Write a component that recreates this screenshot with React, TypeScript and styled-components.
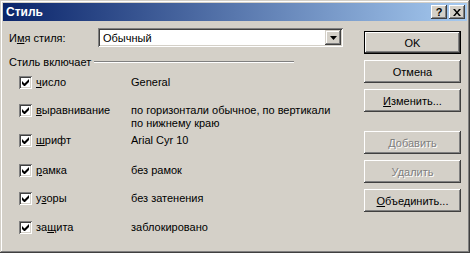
import styled, { createGlobalStyle } from "styled-components";

const GlobalStyle = createGlobalStyle`
    html, body {
        margin: 0;
        padding: 0;
        background: #d4d0c8;
    }
    body {
        font-family: "Liberation Sans", Arial, sans-serif;
        font-size: 11px;
        color: #000;
    }
`;

const rows = [
    { pre: "", key: "ч", rest: "исло", value: ["General"], h: 28 },
    { pre: "", key: "в", rest: "ыравнивание", value: ["по горизонтали обычное, по вертикали", "по нижнему краю"], h: 30 },
    { pre: "", key: "ш", rest: "рифт", value: ["Arial Cyr 10"], h: 30 },
    { pre: "", key: "р", rest: "амка", value: ["без рамок"], h: 28 },
    { pre: "у", key: "з", rest: "оры", value: ["без затенения"], h: 29 },
    { pre: "за", key: "щ", rest: "ита", value: ["заблокировано"], h: 29 },
];

const App = () => {
    return (
        <>
            <GlobalStyle />
            <Window>
                <TitleBar>
                    <Title>Стиль</Title>
                    <CaptionButtons>
                        <CaptionButton>?</CaptionButton>
                        <CaptionButton>
                            <svg width="8" height="7" viewBox="0 0 8 7">
                                <path d="M0 0h2l2 2.5L6 0h2L5 3.5 8 7H6L4 4.5 2 7H0l3-3.5z" fill="#000" />
                            </svg>
                        </CaptionButton>
                    </CaptionButtons>
                </TitleBar>

                <Body>
                    <LeftPane>
                        <NameRow>
                            <NameLabel>И<u>м</u>я стиля:</NameLabel>
                            <Combo>
                                <ComboText>Обычный</ComboText>
                                <ComboArrow>
                                    <svg width="7" height="4" viewBox="0 0 7 4">
                                        <path d="M0 0h7L3.5 4z" fill="#000" />
                                    </svg>
                                </ComboArrow>
                            </Combo>
                        </NameRow>

                        <GroupHeader>
                            <span>Стиль включает</span>
                            <GroupLine />
                        </GroupHeader>

                        <Rows>
                            {rows.map((r) => (
                                <Row key={r.rest} $h={r.h}>
                                    <CheckBox>
                                        <svg width="7" height="7" viewBox="0 0 7 7">
                                            <path d="M0 2v3l2 2h1l4-4V0L2.5 4.5z" fill="#000" />
                                        </svg>
                                    </CheckBox>
                                    <RowLabel>
                                        {r.pre}
                                        <u>{r.key}</u>
                                        {r.rest}
                                    </RowLabel>
                                    <RowValue>
                                        {r.value.map((line) => (
                                            <div key={line}>{line}</div>
                                        ))}
                                    </RowValue>
                                </Row>
                            ))}
                        </Rows>
                    </LeftPane>

                    <ButtonColumn>
                        <Button $default>OK</Button>
                        <Button>Отмена</Button>
                        <Button><u>И</u>зменить...</Button>
                        <Button $disabled $gapTop>Добавить</Button>
                        <Button $disabled>Удалить</Button>
                        <Button><u>О</u>бъединить...</Button>
                    </ButtonColumn>
                </Body>
            </Window>
        </>
    );
};

export default App;

const Window = styled.div`
    width: 470px;
    height: 253px;
    box-sizing: border-box;
    padding: 3px;
    background: #d4d0c8;
    box-shadow:
        inset -1px -1px #404040,
        inset 1px 1px #d4d0c8,
        inset -2px -2px #808080,
        inset 2px 2px #ffffff;
    display: flex;
    flex-direction: column;
`;

const TitleBar = styled.div`
    height: 18px;
    display: flex;
    align-items: center;
    justify-content: space-between;
    background: linear-gradient(to right, #0a246a, #a6caf0);
    padding: 0 2px 0 3px;
`;

const Title = styled.span`
    color: #fff;
    font-weight: bold;
    font-size: 12px;
`;

const CaptionButtons = styled.div`
    display: flex;
    gap: 2px;
`;

const CaptionButton = styled.div`
    width: 16px;
    height: 14px;
    box-sizing: border-box;
    display: flex;
    align-items: center;
    justify-content: center;
    background: #d4d0c8;
    font-weight: bold;
    font-size: 11px;
    box-shadow:
        inset -1px -1px #404040,
        inset 1px 1px #ffffff,
        inset -2px -2px #808080;
`;

const Body = styled.div`
    flex: 1;
    display: flex;
    justify-content: space-between;
    padding: 7px 6px 0 6px;
`;

const LeftPane = styled.div`
    display: flex;
    flex-direction: column;
`;

const NameRow = styled.div`
    display: flex;
    align-items: center;
    height: 19px;
`;

const NameLabel = styled.span`
    width: 89px;
`;

const Combo = styled.div`
    width: 245px;
    height: 19px;
    box-sizing: border-box;
    background: #fff;
    display: flex;
    align-items: center;
    justify-content: space-between;
    padding: 2px;
    box-shadow:
        inset 1px 1px #808080,
        inset -1px -1px #ffffff,
        inset 2px 2px #404040,
        inset -2px -2px #d4d0c8;
`;

const ComboText = styled.span`
    padding-left: 3px;
`;

const ComboArrow = styled.div`
    width: 16px;
    height: 15px;
    box-sizing: border-box;
    display: flex;
    align-items: center;
    justify-content: center;
    background: #d4d0c8;
    box-shadow:
        inset -1px -1px #404040,
        inset 1px 1px #d4d0c8,
        inset -2px -2px #808080,
        inset 2px 2px #ffffff;
`;

const GroupHeader = styled.div`
    display: flex;
    align-items: center;
    gap: 3px;
    margin-top: 8px;
    height: 14px;
`;

const GroupLine = styled.div`
    width: 200px;
    height: 1px;
    background: #808080;
    border-bottom: 1px solid #fff;
`;

const Rows = styled.div`
    display: flex;
    flex-direction: column;
    padding-top: 7px;
    padding-left: 10px;
`;

const Row = styled.div<{ $h: number }>`
    display: flex;
    align-items: flex-start;
    height: ${(p) => p.$h}px;
    line-height: 13px;
`;

const CheckBox = styled.div`
    width: 13px;
    height: 13px;
    box-sizing: border-box;
    background: #fff;
    display: flex;
    align-items: center;
    justify-content: center;
    box-shadow:
        inset 1px 1px #808080,
        inset -1px -1px #ffffff,
        inset 2px 2px #404040,
        inset -2px -2px #d4d0c8;
`;

const RowLabel = styled.span`
    width: 95px;
    margin-left: 4px;
`;

const RowValue = styled.div`
    display: flex;
    flex-direction: column;
`;

const ButtonColumn = styled.div`
    display: flex;
    flex-direction: column;
    gap: 6px;
    padding-top: 3px;
`;

const Button = styled.div<{ $default?: boolean; $disabled?: boolean; $gapTop?: boolean }>`
    width: 97px;
    height: 23px;
    box-sizing: border-box;
    display: flex;
    align-items: center;
    justify-content: center;
    background: #d4d0c8;
    margin-top: ${(p) => (p.$gapTop ? "13px" : "0")};
    color: ${(p) => (p.$disabled ? "#808080" : "#000")};
    text-shadow: ${(p) => (p.$disabled ? "1px 1px #ffffff" : "none")};
    box-shadow: ${(p) =>
        p.$default
            ? "inset 0 0 0 1px #000, inset -2px -2px #404040, inset 2px 2px #ffffff, inset -3px -3px #808080"
            : "inset -1px -1px #404040, inset 1px 1px #ffffff, inset -2px -2px #808080"};
`;
